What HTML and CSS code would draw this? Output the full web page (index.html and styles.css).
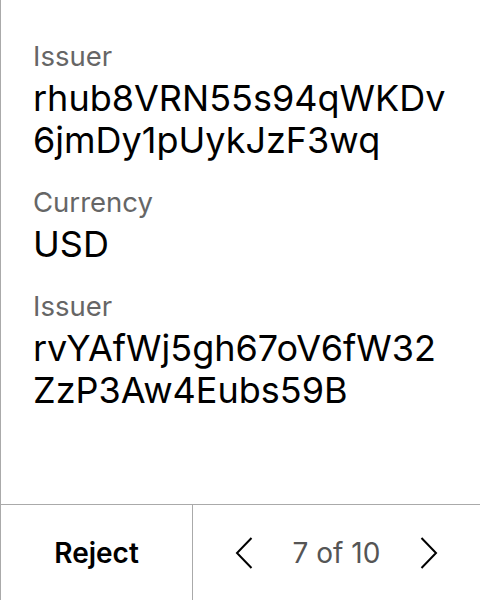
FILE: index.html
```html
<!DOCTYPE html>
<html>
<head>
<meta charset="utf-8">
<link rel="stylesheet" href="styles.css">
</head>
<body>
<div class="screen">
  <div class="content">
    <div class="field">
      <div class="label">Issuer</div>
      <div class="value">rhub8VRN55s94qWKDv<br>6jmDy1pUykJzF3wq</div>
    </div>
    <div class="field">
      <div class="label">Currency</div>
      <div class="value">USD</div>
    </div>
    <div class="field">
      <div class="label">Issuer</div>
      <div class="value">rvYAfWj5gh67oV6fW32<br>ZzP3Aw4Eubs59B</div>
    </div>
  </div>
  <div class="footer">
    <div class="reject">Reject</div>
    <div class="pager">
      <svg class="chev" width="18" height="32" viewBox="0 0 18 32"><path d="M16.5 1 L2 16 L16.5 31" fill="none" stroke="#000" stroke-width="2"/></svg>
      <span class="count">7 of 10</span>
      <svg class="chev" width="18" height="32" viewBox="0 0 18 32"><path d="M1.5 1 L16 16 L1.5 31" fill="none" stroke="#000" stroke-width="2"/></svg>
    </div>
  </div>
</div>
</body>
</html>
```
FILE: styles.css
```css
html, body {
  margin: 0;
  padding: 0;
  background: #fff;
}
.screen {
  width: 480px;
  height: 600px;
  box-sizing: border-box;
  border-left: 1px solid #aaa;
  display: flex;
  flex-direction: column;
  font-family: Inter, "Noto Sans", sans-serif;
}
.content {
  flex: 1;
  padding: 39px 0 0 32px;
  display: flex;
  flex-direction: column;
  gap: 24px;
}
.field {
  display: flex;
  flex-direction: column;
  gap: 4px;
}
.label {
  font-size: 27.5px;
  line-height: 34px;
  color: #666;
}
.value {
  font-size: 36px;
  line-height: 42px;
  color: #000;
}
.footer {
  height: 96px;
  box-sizing: border-box;
  border-top: 1px solid #aaa;
  display: flex;
}
.reject {
  width: 191px;
  border-right: 1px solid #aaa;
  display: flex;
  align-items: center;
  justify-content: center;
  font-size: 28px;
  font-weight: 600;
  color: #000;
}
.pager {
  flex: 1;
  display: flex;
  align-items: center;
  justify-content: center;
  gap: 40px;
}
.count {
  font-size: 28px;
  color: #555;
}
```
